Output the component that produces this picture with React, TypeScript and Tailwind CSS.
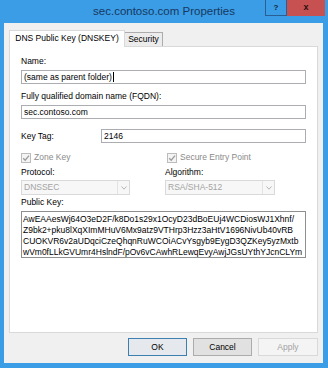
const font = { fontFamily: '"Liberation Sans", Arial, sans-serif' }

function TextBox({ value, caret }: { value: string; caret?: boolean }): React.JSX.Element {
  return (
    <div className="flex h-[14px] items-center border border-[#abadb3] bg-white pl-[2px] text-[8.5px] text-black">
      <span>{value}</span>
      {caret && <span className="ml-[1px] h-[10px] w-px bg-black" />}
    </div>
  )
}

function CheckBox({ label }: { label: string }): React.JSX.Element {
  return (
    <div className="flex h-[11px] items-center gap-[3px] text-[8.5px] text-[#8a8a8a]">
      <svg width="10" height="10" viewBox="0 0 10 10">
        <rect x="0.5" y="0.5" width="9" height="9" fill="#f4f4f4" stroke="#bcbcbc" />
        <path d="M2.2 5.2 L4.2 7.2 L8 2.6" fill="none" stroke="#9c9c9c" strokeWidth="1.3" />
      </svg>
      <span>{label}</span>
    </div>
  )
}

function Combo({ value, width }: { value: string; width: string }): React.JSX.Element {
  return (
    <div className={`flex h-[15px] items-stretch border border-[#d9d9d9] bg-[#f7f7f7] ${width}`}>
      <div className="flex flex-1 items-center pl-[2px] text-[8.5px] text-[#a3a3a3]">{value}</div>
      <div className="flex w-[12px] items-center justify-center border-l border-[#e3e3e3]">
        <svg width="6" height="4" viewBox="0 0 6 4">
          <path d="M0.5 0.5 L3 3.2 L5.5 0.5" fill="none" stroke="#b3b3b3" strokeWidth="1" />
        </svg>
      </div>
    </div>
  )
}

const keyLines = [
  'AwEAAesWj64O3eD2F/k8Do1s29x1OcyD23dBoEUj4WCDiosWJ1Xhnf/',
  'Z9bk2+pku8lXqXImMHuV6Mx9atz9VTHrp3Hzz3aHtV1696NivUb40vRB',
  'CUOKVR6v2aUDqciCzeQhqnRuWCOiACvYsgyb9EygD3QZKey5yzMxtb',
  'wVm0fLLkGVUmr4HslndF/pOv6vCAwhRLewqEvyAwjJGsUYthYJcnCLYm'
]

export default function App(): React.JSX.Element {
  return (
    <div className="flex h-[368px] w-[328px] flex-col overflow-hidden bg-[#3a9de6]" style={font}>
      {/* title bar */}
      <div className="relative h-[23px] shrink-0">
        <div className="pt-[4px] text-center text-[11.5px] leading-[15px] text-[#183860]">
          sec.contoso.com Properties
        </div>
        <div className="absolute right-[3px] top-0 flex">
          <div className="flex h-[16px] w-[22px] items-center justify-center border border-t-0 border-[#2a5f93] bg-[#3a9de6] text-[8px] font-bold text-[#10243c]">
            ?
          </div>
          <div className="flex h-[16px] w-[38px] items-center justify-center bg-[#c75050] text-[9px] font-bold text-[#2a1010]">
            x
          </div>
        </div>
      </div>

      {/* client area */}
      <div className="mb-[5px] ml-[4px] mr-[5px] flex flex-1 flex-col bg-[#f0f0f0]">
        {/* tabs */}
        <div className="flex h-[23px] items-end pl-[5px]">
          <div className="relative z-10 -mb-px flex h-[17px] w-[116px] items-center justify-center border border-b-0 border-[#d9d9d9] bg-white pb-[1px] text-[8.5px] text-black">
            DNS Public Key (DNSKEY)
          </div>
          <div className="flex h-[14px] w-[38px] items-center justify-center border border-b-0 border-l-0 border-[#acacac] bg-[#ececec] text-[8.5px] text-black">
            Security
          </div>
        </div>

        {/* panel */}
        <div className="ml-[5px] mr-[5px] flex h-[287px] flex-col border border-[#d9d9d9] bg-white px-[11px] text-[8.5px] text-black">
          <div className="mt-[9px] leading-[11px]">Name:</div>
          <div className="mt-[3px]">
            <TextBox value="(same as parent folder)" caret />
          </div>
          <div className="mt-[7px] leading-[11px]">Fully qualified domain name (FQDN):</div>
          <div className="mt-[3px]">
            <TextBox value="sec.contoso.com" />
          </div>
          <div className="mt-[10px] flex items-center">
            <div className="w-[80px] leading-[11px]">Key Tag:</div>
            <div className="flex-1">
              <TextBox value="2146" />
            </div>
          </div>

          <div className="mt-[9px] grid grid-cols-[144px_1fr]">
            <CheckBox label="Zone Key" />
            <div className="pl-[2px]">
              <CheckBox label="Secure Entry Point" />
            </div>
            <div className="mt-[4px] leading-[11px]">Protocol:</div>
            <div className="mt-[4px] leading-[11px]">Algorithm:</div>
            <div className="mt-[2px]">
              <Combo value="DNSSEC" width="w-[109px]" />
            </div>
            <div className="mt-[2px]">
              <Combo value="RSA/SHA-512" width="w-[110px]" />
            </div>
          </div>

          <div className="mt-[2px] leading-[11px]">Public Key:</div>
          <div className="mt-[3px] h-[47px] overflow-hidden border border-[#8f8f8f] bg-white pl-[1px] pt-[2px] text-[8.5px] leading-[11px]">
            {keyLines.map((line) => (
              <div key={line} className="whitespace-nowrap">
                {line}
              </div>
            ))}
          </div>
        </div>

        {/* buttons */}
        <div className="mr-[5px] mt-[5px] flex justify-end gap-[6px] text-[8.5px]">
          <button className="h-[18px] w-[59px] border border-[#3c7fb1] bg-[#e5e8ec] text-black">OK</button>
          <button className="h-[18px] w-[59px] border border-[#acacac] bg-[#e1e1e1] text-black">Cancel</button>
          <button className="h-[18px] w-[60px] border border-[#d9d9d9] bg-[#f4f4f4] text-[#a3a3a3]">Apply</button>
        </div>
      </div>
    </div>
  )
}
